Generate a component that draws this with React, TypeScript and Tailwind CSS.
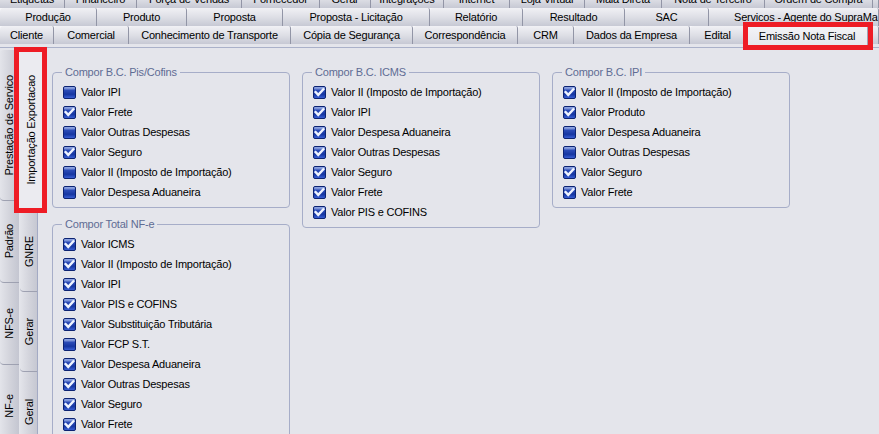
import React from "react";

type Tab = [string, string];

const row0: Tab[] = [
  ["Etiquetas", "w-[65px]"],
  ["Financeiro", "w-[72px]"],
  ["Força de Vendas", "w-[105px]"],
  ["Fornecedor", "w-[78px]"],
  ["Gerar", "w-[51px]"],
  ["Integrações", "w-[73px]"],
  ["Internet", "w-[66px]"],
  ["Loja Virtual", "w-[75px]"],
  ["Mala Direta", "w-[77px]"],
  ["Nota de Terceiro", "w-[103px]"],
  ["Ordem de Compra", "w-[108px]"],
];

const row1: Tab[] = [
  ["Produção", "w-[97px]"],
  ["Produto", "w-[90px]"],
  ["Proposta", "w-[96px]"],
  ["Proposta - Licitação", "w-[147px]"],
  ["Relatório", "w-[93px]"],
  ["Resultado", "w-[102px]"],
  ["SAC", "w-[84px]"],
];

const row2: Tab[] = [
  ["Cliente", "w-[54px]"],
  ["Comercial", "w-[75px]"],
  ["Conhecimento de Transporte", "w-[162px]"],
  ["Cópia de Segurança", "w-[122px]"],
  ["Correspondência", "w-[105px]"],
  ["CRM", "w-[56px]"],
  ["Dados da Empresa", "w-[116px]"],
  ["Edital", "w-[56px]"],
];

const tabCls =
  "h-[18px] shrink-0 flex items-center justify-center whitespace-nowrap rounded-tl-[4px] rounded-tr-[2px] border-r border-[#9295a6] bg-linear-to-b from-[#f1f1f5] via-[#dedfe6] to-[#c7c9d4]";

function TabRow({ tabs, extra }: { tabs: Tab[]; extra?: React.ReactNode }) {
  return (
    <div className="flex items-start h-[18px] bg-[#f7f7fa]">
      {tabs.map(([label, w]) => (
        <div key={label} className={`${tabCls} ${w}`}>
          {label}
        </div>
      ))}
      {extra}
    </div>
  );
}

function Cb({ checked }: { checked: boolean }) {
  return (
    <svg width="13" height="13" viewBox="0 0 13 13" className="shrink-0">
      <rect x="0.5" y="0.5" width="12" height="12" rx="1.5" fill="url(#cbFill)" stroke="#0c2372" />
      <rect x="1" y="1" width="11" height="2.5" rx="1" fill="#ffffff" opacity="0.28" />
      {checked && (
        <path
          d="M2.6 6.1 L5.2 8.9 L10.3 3.4"
          fill="none"
          stroke="#eef3ff"
          strokeWidth="2.4"
          strokeLinecap="square"
          strokeLinejoin="miter"
        />
      )}
    </svg>
  );
}

type Item = [string, boolean];

function Group({ title, items }: { title: string; items: Item[] }) {
  return (
    <fieldset className="w-[238px] rounded-[4px] border border-[#a6adc8]">
      <legend className="ml-[9px] px-[3px] leading-[14px] text-[#5f6c94]">{title}</legend>
      <div className="pl-[10px] pt-[3px] pb-[5px]">
        {items.map(([label, c], i) => (
          <div key={i} className="flex items-center h-[20px] gap-[5px] whitespace-nowrap">
            <Cb checked={c} />
            <span>{label}</span>
          </div>
        ))}
      </div>
    </fieldset>
  );
}

function VTab({ label, cls }: { label: string; cls: string }) {
  return (
    <div
      className={`${cls} shrink-0 flex items-center justify-center rounded-l-[4px] border-b border-[#9ea1b1] bg-linear-to-r from-[#e3e4ea] via-[#d3d4dc] to-[#c4c6d1]`}
    >
      <span className="[writing-mode:vertical-rl] rotate-180 whitespace-nowrap">{label}</span>
    </div>
  );
}

export default function App() {
  return (
    <div className="relative w-[879px] h-[434px] overflow-hidden bg-[#e4e5eb] text-black text-[11px] tracking-[-0.2px] font-['Liberation_Sans',Arial,sans-serif]">
      <svg width="0" height="0" className="absolute">
        <defs>
          <linearGradient id="cbFill" x1="0" y1="0" x2="0" y2="1">
            <stop offset="0" stopColor="#7391e2" />
            <stop offset="0.3" stopColor="#2c4db8" />
            <stop offset="0.65" stopColor="#1636a2" />
            <stop offset="1" stopColor="#3d64da" />
          </linearGradient>
        </defs>
      </svg>

      {/* top tab strip */}
      <div className="-mt-[10px] pb-[3px] border-b border-[#aab1c9]">
        <TabRow tabs={row0} extra={<div className={`${tabCls} flex-1`} />} />
        <TabRow
          tabs={row1}
          extra={
            <div className={`${tabCls} flex-1 min-w-0 overflow-hidden justify-start pl-[25px]`}>
              Servicos - Agente do SupraMa
            </div>
          }
        />
        <TabRow
          tabs={row2}
          extra={
            <>
              <div className="relative z-10 -mt-[2px] h-[24px] w-[122px] shrink-0 flex items-start justify-center pt-[3px] rounded-t-[3px] border-x border-t border-[#a0a3b4] bg-linear-to-b from-[#f4f4f7] to-[#e4e5eb] whitespace-nowrap">
                Emissão Nota Fiscal
              </div>
              <div className={`${tabCls} flex-1`} />
            </>
          }
        />
      </div>

      {/* body */}
      <div className="flex h-[386px]">
        <div className="flex flex-col w-[19px] pt-[2px]">
          <VTab label="Prestação de Servico" cls="h-[151px] w-[19px]" />
          <VTab label="Padrão" cls="h-[82px] w-[19px]" />
          <VTab label="NFS-e" cls="h-[82px] w-[19px]" />
          <VTab label="NF-e" cls="h-[82px] w-[19px]" />
        </div>
        <div className="flex flex-col w-[18px] items-start">
          <div className="relative z-10 h-[164px] w-[24px] shrink-0 flex items-center justify-center bg-[#ebebf0]">
            <span className="[writing-mode:vertical-rl] rotate-180 whitespace-nowrap">Importação Exportacao</span>
          </div>
          <VTab label="GNRE" cls="h-[80px] w-[18px] ml-[1px]" />
          <VTab label="Gerar" cls="h-[80px] w-[18px] ml-[1px]" />
          <VTab label="Geral" cls="h-[80px] w-[18px] ml-[1px]" />
        </div>
        <div className="flex-1 border-l border-[#a3aac4] flex items-start gap-[12px] pl-[14px] pt-[17px]">
          <div className="flex flex-col gap-[9px]">
            <Group
              title="Compor B.C. Pis/Cofins"
              items={[
                ["Valor IPI", false],
                ["Valor Frete", true],
                ["Valor Outras Despesas", false],
                ["Valor Seguro", true],
                ["Valor II (Imposto de Importação)", false],
                ["Valor Despesa Aduaneira", false],
              ]}
            />
            <Group
              title="Compor Total NF-e"
              items={[
                ["Valor ICMS", true],
                ["Valor II (Imposto de Importação)", true],
                ["Valor IPI", true],
                ["Valor PIS e COFINS", true],
                ["Valor Substituição Tributária", true],
                ["Valor FCP S.T.", false],
                ["Valor Despesa Aduaneira", true],
                ["Valor Outras Despesas", true],
                ["Valor Seguro", true],
                ["Valor Frete", true],
              ]}
            />
          </div>
          <Group
            title="Compor B.C. ICMS"
            items={[
              ["Valor II (Imposto de Importação)", true],
              ["Valor IPI", true],
              ["Valor Despesa Aduaneira", true],
              ["Valor Outras Despesas", true],
              ["Valor Seguro", true],
              ["Valor Frete", true],
              ["Valor PIS e COFINS", true],
            ]}
          />
          <Group
            title="Compor B.C. IPI"
            items={[
              ["Valor II (Imposto de Importação)", true],
              ["Valor Produto", true],
              ["Valor Despesa Aduaneira", false],
              ["Valor Outras Despesas", false],
              ["Valor Seguro", true],
              ["Valor Frete", true],
            ]}
          />
        </div>
      </div>

      {/* red annotation boxes */}
      <div className="absolute left-[743px] top-[22px] w-[130px] h-[28px] border-[5px] border-[#ee1c25] z-20" />
      <div className="absolute left-[14px] top-[47px] w-[33px] h-[166px] border-[5px] border-[#ee1c25] z-20" />
    </div>
  );
}
